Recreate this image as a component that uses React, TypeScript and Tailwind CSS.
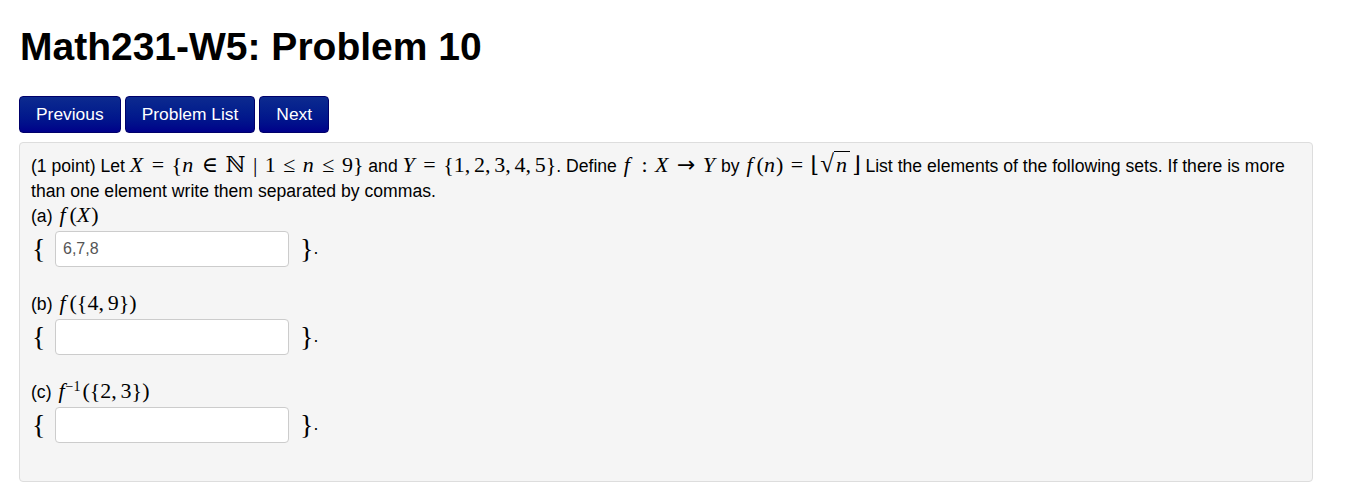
import React from 'react';

const serif = "font-['Liberation_Serif','DejaVu_Serif',serif]";

function M({ children }: { children: React.ReactNode }) {
  return <span className={`${serif} text-[22px] leading-none whitespace-nowrap`}>{children}</span>;
}

// relation / binary operator with TeX-like spacing
function R({ children }: { children: React.ReactNode }) {
  return <span className="mx-[0.34em]">{children}</span>;
}

// italic variable, with a little italic correction
function I({ children }: { children: React.ReactNode }) {
  return <i className="pr-[1px]">{children}</i>;
}

// italic f is wide in TeX fonts
function F() {
  return <i className="pl-[2px] pr-[4px]">f</i>;
}

function C() {
  return <span className="mr-[0.17em]">,</span>;
}

function Answer({ value }: { value?: string }) {
  return (
    <div className="flex items-center h-[37px] mt-[1px]">
      <span className={`${serif} text-[28px] w-[24px] pl-[1px] leading-none`}>{'{'}</span>
      <input
        type="text"
        defaultValue={value}
        className="w-[234px] h-[36px] bg-white border border-[#cccccc] rounded-[4px] px-[7px] text-[16px] text-[#555555] outline-none"
      />
      <span className={`${serif} text-[28px] ml-[11px] leading-none`}>{'}'}</span>
      <span>.</span>
    </div>
  );
}

export default function App() {
  return (
    <div className="bg-white min-h-screen px-[19px] pt-[22px] text-black font-['Liberation_Sans',Arial,sans-serif]">
      <h1 className="text-[39px] font-bold leading-[50px] pl-[1px]">Math231-W5: Problem 10</h1>

      <div className="flex gap-[4px] mt-[24px]">
        {['Previous', 'Problem List', 'Next'].map((label) => (
          <button
            key={label}
            className="h-[37px] px-[16px] rounded-[4px] text-white text-[17.4px] bg-gradient-to-b from-[#0d2a8f] to-[#00008a] border border-[#00006a]"
          >
            {label}
          </button>
        ))}
      </div>

      <div className="mt-[9px] w-[1294px] bg-[#f5f5f5] border border-[#dddddd] rounded-[4px] px-[11px] pt-[8px] pb-[13px] text-[17.6px] leading-[25px]">
        <div>
          (1 point) Let{' '}
          <M>
            <I>X</I>
            <R>=</R>
            {'{'}
            <I>n</I>
            <R>∈</R>ℕ<R>|</R>1<R>≤</R>
            <I>n</I>
            <R>≤</R>9{'}'}
          </M>{' '}
          and{' '}
          <M>
            <I>Y</I>
            <R>=</R>
            {'{'}1<C />2<C />3<C />4<C />5{'}'}
          </M>
          . Define{' '}
          <M>
            <F />
            <R>:</R>
            <I>X</I>
            <R>
              <span className="font-['DejaVu_Sans',sans-serif] text-[22px]">→</span>
            </R>
            <I>Y</I>
          </M>{' '}
          by{' '}
          <M>
            <F />(<I>n</I>)<R>=</R>
            <span className="mr-[1px]">⌊</span>
            <span className="text-[25px]">√</span>
            <span className="border-t border-black px-[2px]">
              <I>n</I>
            </span>
            <span className="ml-[2px]">⌋</span>
          </M>{' '}
          List the elements of the following sets. If there is more than one element write them separated by commas.
        </div>
        <div>
          (a){' '}
          <M>
            <F />(<I>X</I>)
          </M>
        </div>
        <Answer value="6,7,8" />
        <div className="h-[25px]" />
        <div>
          (b){' '}
          <M>
            <F />({'{'}4<C />9{'}'})
          </M>
        </div>
        <Answer />
        <div className="h-[25px]" />
        <div>
          (c){' '}
          <M>
            <i className="pl-[2px]">f</i>
            <sup className="text-[14px] ml-[1px] mr-[2px]">−1</sup>({'{'}2<C />3{'}'})
          </M>
        </div>
        <Answer />
        <div className="h-[25px]" />
      </div>
    </div>
  );
}
